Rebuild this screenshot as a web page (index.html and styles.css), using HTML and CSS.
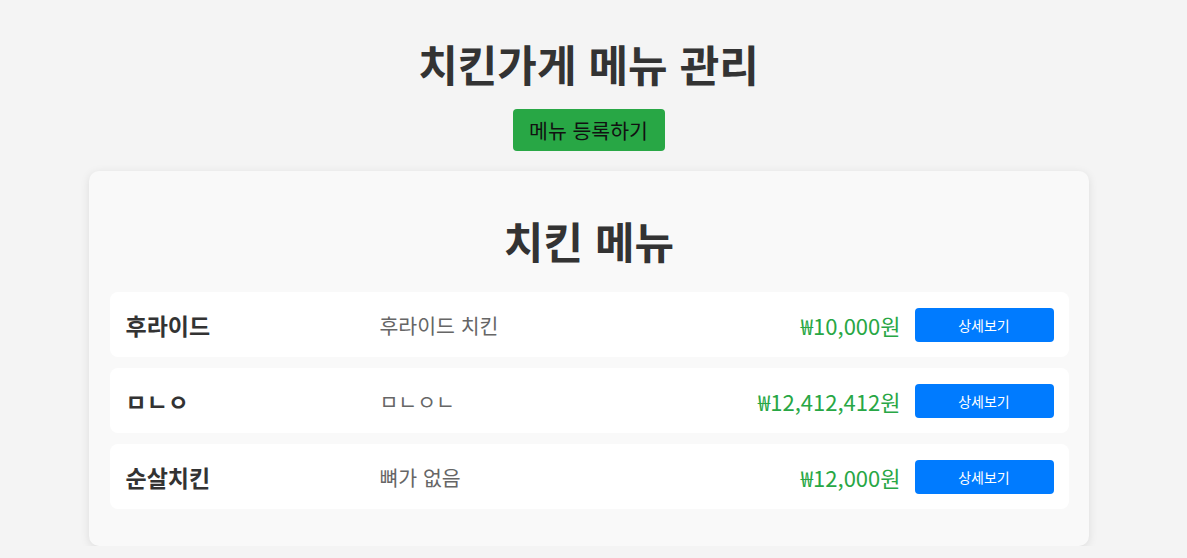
FILE: index.html
```html
<!DOCTYPE html>
<html lang="ko">
<head>
    <meta charset="UTF-8">
    <meta name="viewport" content="width=device-width, initial-scale=1.0">
    <title>치킨가게 메뉴 관리</title>
    <link rel="stylesheet" href="styles.css">
</head>
<body>

    <h1 class="page-title">치킨가게 메뉴 관리</h1>
    <button class="add-button">메뉴 등록하기</button>

    <!-- 메뉴 목록 -->
    <div class="menu-card">
        <h2 class="menu-title">치킨 메뉴</h2>

        <div class="menu-list">
            <div class="menu-item">
                <div class="menu-name">후라이드</div>
                <div class="menu-desc">후라이드 치킨</div>
                <div class="menu-price">₩10,000원</div>
                <button class="detail-button">상세보기</button>
            </div>
            <div class="menu-item">
                <div class="menu-name">ㅁㄴㅇ</div>
                <div class="menu-desc">ㅁㄴㅇㄴ</div>
                <div class="menu-price">₩12,412,412원</div>
                <button class="detail-button">상세보기</button>
            </div>
            <div class="menu-item">
                <div class="menu-name">순살치킨</div>
                <div class="menu-desc">뼈가 없음</div>
                <div class="menu-price">₩12,000원</div>
                <button class="detail-button">상세보기</button>
            </div>
        </div>
    </div>

</body>
</html>
```

FILE: styles.css
```css
:root {
    --fondo: #f4f4f4;
    --tarjeta: #f9f9f9;
    --texto: #333;
    --verde: #28a745;
    --azul: #007bff;
}

body {
    font-family: "Noto Sans CJK KR", "Noto Sans", sans-serif;
    background-color: var(--fondo);
    color: var(--texto);
    margin: 0;
    padding: 0 10px 0 0;
    display: flex;
    flex-direction: column;
    align-items: center;
}

.page-title {
    font-size: 43px;
    font-weight: bold;
    margin: 33px 0 0;
    line-height: 60px;
}

.add-button {
    font-family: inherit;
    font-size: 20.5px;
    background-color: var(--verde);
    color: #111;
    border: none;
    border-radius: 4px;
    width: 152px;
    height: 42px;
    padding: 0;
    margin-top: 16px;
    cursor: pointer;
}

/* 메뉴 카드 */
.menu-card {
    width: 1000px;
    box-sizing: border-box;
    margin-top: 20px;
    padding: 34px 20px 37px 21px;
    background-color: var(--tarjeta);
    border-radius: 10px;
    box-shadow: 0 2px 10px rgba(0, 0, 0, 0.1);
}

.menu-title {
    text-align: center;
    font-size: 43px;
    font-weight: bold;
    margin: 0 0 17px;
    line-height: 70px;
}

.menu-list {
    display: flex;
    flex-direction: column;
    gap: 11px;
}

.menu-item {
    display: flex;
    align-items: center;
    height: 65px;
    padding: 0 15px 0 16px;
    background-color: #fff;
    border-radius: 8px;
}

.menu-name {
    width: 254px;
    font-size: 23px;
    font-weight: bold;
}

.menu-desc {
    flex: 1;
    font-size: 20.5px;
    color: #666;
}

.menu-price {
    font-size: 22px;
    color: var(--verde);
    margin-right: 14px;
}

.detail-button {
    font-family: inherit;
    font-size: 14px;
    width: 139px;
    height: 34px;
    background-color: var(--azul);
    color: #fff;
    border: none;
    border-radius: 4px;
    cursor: pointer;
}
```
